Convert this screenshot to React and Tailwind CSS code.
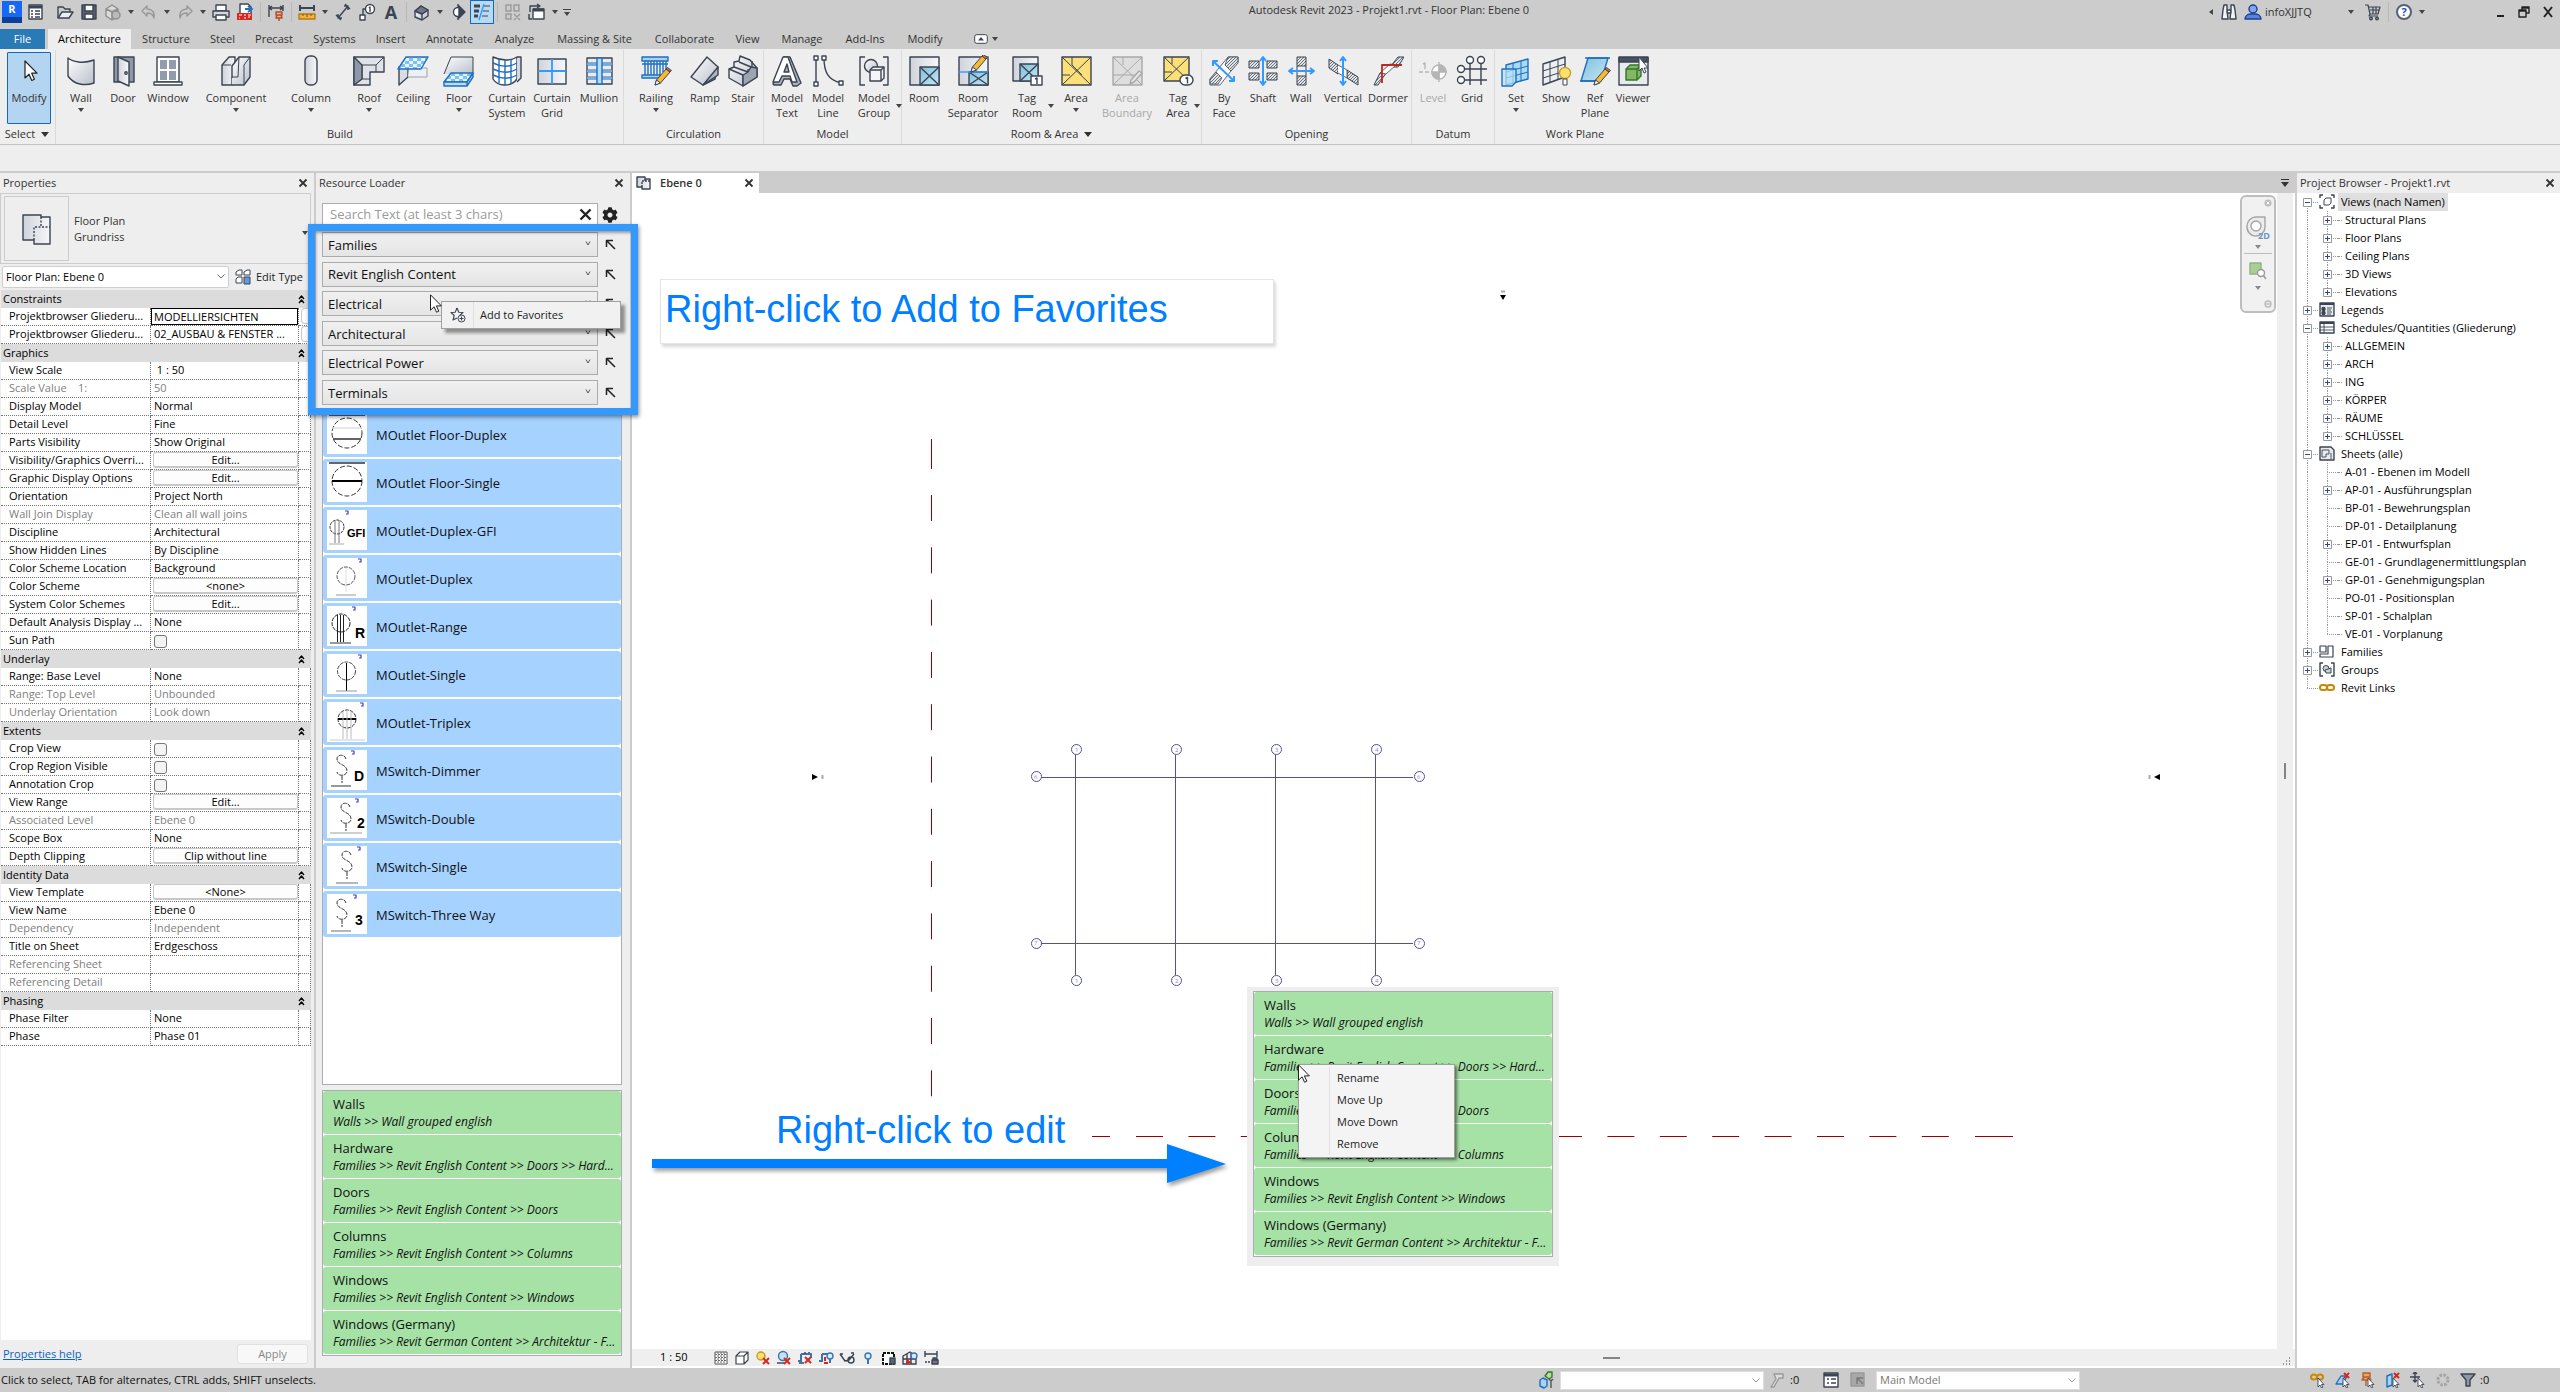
import clsx from 'clsx';
import { FaCog } from 'react-icons/fa';

const INK = '#3b4453';

const Svg = ({ w = 32, h = w, box = `0 0 ${w} ${h}`, className, children }) => (
  <svg width={w} height={h} viewBox={box} className={clsx('shrink-0', className)} fill="none" stroke={INK} strokeWidth="1.4" strokeLinejoin="round" aria-hidden="true">
    {children}
  </svg>
);

/* Shared fills for the ribbon icons */
const Fills = () => (
  <svg width="0" height="0" className="absolute" aria-hidden="true">
    <defs>
      <linearGradient id="metal" x1="0" y1="0" x2="1" y2="1">
        <stop offset="0" stopColor="#ffffff" />
        <stop offset="1" stopColor="#b9bfca" />
      </linearGradient>
      <linearGradient id="plate" x1="0" y1="0" x2="1" y2="0">
        <stop offset="0" stopColor="#cfd3da" />
        <stop offset="1" stopColor="#f6f7f9" />
      </linearGradient>
      <linearGradient id="aqua" x1="0" y1="0" x2="1" y2="1">
        <stop offset="0" stopColor="#7fbfdc" />
        <stop offset="1" stopColor="#c6e6f5" />
      </linearGradient>
      <pattern id="hatch" width="3" height="3" patternUnits="userSpaceOnUse">
        <rect width="3" height="3" fill="#e3e5e9" />
        <path d="M0 3L3 0" stroke="#5c6470" strokeWidth="0.9" />
      </pattern>
      <pattern id="check" width="8" height="6" patternUnits="userSpaceOnUse">
        <rect width="8" height="6" fill="#e4f3fd" />
        <path d="M0 0h4v3H0zM4 3h4v3H4z" fill="#7ec1f0" />
      </pattern>
    </defs>
  </svg>
);

const Pencil = () => (
  <g strokeWidth="1">
    <path d="M15 30l1.500-5L26 14l4 3-9.500 11z" fill="#f7b92f" />
    <path d="M26 14l1.500-1.500 4 3L30 17z" fill="#e06a4a" />
    <path d="M15 30l1.500-5 4 3z" fill="#fff" />
  </g>
);

const Pointer = ({ w = 12 }) => (
  <svg width={w} height="19" viewBox="0 0 12 19" fill="#fff" stroke="#222" strokeWidth="1" aria-hidden="true">
    <path d="M.5 .8v15.400l3.600-3.400 2.400 5.400 2.300-1-2.400-5.300h5z" />
  </svg>
);

const ribbonIcons = {
  modify: <g stroke="#222" strokeWidth="1.2"><path d="M12 5v17l4-3.800 2.800 6.300 2.600-1.200-2.700-6.100h5.300z" fill="#fff" /></g>,
  wall: <path d="M3 3c5 4 15 6 26 2v23c-9 3-20 2-26-7z" fill="url(#metal)" />,
  door: <g><path d="M7 2h20v25H7z" fill="#8f98a8" /><path d="M11 2l11 5v24l-11-5z" fill="url(#plate)" /><circle cx="19" cy="18" r="1.200" /></g>,
  window: <g><path d="M5 2h22v25H5z" fill="#fff" /><path d="M8 5h7v9H8zM17 5h7v9h-7zM8 16h7v9H8zM17 16h7v9h-7z" fill="#939cac" stroke="none" /><path d="M2 27h28v3H2z" fill="#fff" /></g>,
  component: <g><path d="M2 10l7-8h6v18l-3 3v7H2z" fill="url(#plate)" /><path d="M12 23V11l7-9h11v20l-6 8H12" fill="url(#metal)" /><path d="M2 10h9M19 2l-1 20h-6M24 10v20M24 10l6-8" strokeWidth="1" /></g>,
  column: <rect x="10" y="1" width="12" height="29" rx="5" fill="url(#plate)" />,
  roof: <g><path d="M1 2h30v15H17v13H1z" fill="#dfe2e7" /><path d="M1 2l8 8h14v7M9 10v14l-8 6M31 2l-8 8M9 24h8" strokeWidth="1" /><path d="M1 2l8 8v14l-8 6z" fill="#8f98a8" /></g>,
  ceiling: <g><path d="M2 12v18l9-8V12z" fill="#d9dde3" /><path d="M12 13h18v9H11" fill="#eef0f3" stroke="#9aa1ad" strokeWidth="1" /><path d="M1 14L9 2h22l-7 12z" fill="url(#check)" stroke="#1f6fbf" /></g>,
  floor: <g><path d="M1 19L8 2h22v17" fill="url(#metal)" strokeWidth="1" /><path d="M1 27l7-9h22l-6 9z" fill="url(#check)" stroke="#1f6fbf" /><path d="M1 27h23v4H1zM24 27l6-9v4l-6 9z" fill="#b6dcf6" stroke="#1f6fbf" /></g>,
  curtainSystem: <g><path d="M2 2c8 4 18 4 24 0v22c-6 8-19 8-24 0z" fill="#fff" /><path d="M26 2h4v21l-4 4" fill="#d5d9df" /><path d="M8 4v24M14 5v25M20 4v25M2 8c8 4 17 4 24 0M2 14c8 4 17 4 24 0M2 20c8 4 17 4 24 0" stroke="#1f6fbf" /></g>,
  curtainGrid: <g><path d="M2 4h28v25H2z" fill="url(#plate)" /><path d="M16 4v25M2 16h28" stroke="#3399ff" strokeWidth="1.800" /></g>,
  mullion: <g><path d="M4 3h25v26H4z" fill="#e9ebee" /><path d="M4 9h25M4 16h25M4 23h25" stroke="#1f6fbf" strokeWidth="3" /><path d="M4 9h25M4 16h25M4 23h25" stroke="#cfe7fa" strokeWidth="1" /><path d="M14 3h5v26h-5z" fill="#b6dcf6" stroke="#1f6fbf" /></g>,
  railing: <g><path d="M2 2h26v4H2z" fill="#a9d3f5" stroke="#1f6fbf" /><path d="M5 6v14M8 6v14M11 6v14M14 6v14M17 6v14M20 6v14M23 6v11M26 6v8M2 9h26" stroke="#1f6fbf" /><path d="M2 20h18v3H2z" fill="#a9d3f5" stroke="#1f6fbf" /><Pencil /></g>,
  ramp: <g><path d="M2 22L18 2l11 10-3 12-12 6z" fill="url(#metal)" /><path d="M14 30l15-18v8z" fill="#aeb5c1" /></g>,
  stair: <g><path d="M2 14l5-2V7l5-1 1-5 10 4 7 8v9L16 31 2 23z" fill="url(#metal)" /><path d="M2 14l14 6M7 12l14 5M12 7l12 5M16 20v11M21 14v5M25 6v6" /><path d="M16 20l5-3 3-5 6 1v9L16 31z" fill="#9ca4b1" /></g>,
  modelText: <g><path d="M2 29L13 2h6l11 26-4 3h-4l-3-7h-6l-3 6H3z" fill="#aab1bd" /><path d="M2 27L12 2h5l9 25h-5l-2-6h-8l-3 6zM13 17h5l-2-8z" fill="#fff" /></g>,
  modelLine: <g><path d="M4 3v26M12 3c0 14 4 22 17 25" /><path d="M2 1h4v4H2zM2 27h4v4H2zM10 1h4v4h-4zM27 26h4v4h-4z" fill="#fff" /></g>,
  modelGroup: <g><path d="M7 2H2v28h5M25 2h5v28h-5" /><circle cx="13" cy="11" r="6.500" fill="url(#metal)" /><path d="M12 15l3-3h11v11l-3 3H12z" fill="#f4f5f7" /><path d="M12 15h11v11M23 15l3-3" /></g>,
  room: <g><path d="M2 2h29v28H2z" fill="url(#plate)" /><path d="M12 12h19v18H12z" fill="url(#aqua)" /><path d="M12 12l19 18M31 12L12 30" /></g>,
  roomSeparator: <g><path d="M2 2h29v28H2z" fill="url(#plate)" /><path d="M12 17h19v13H12z" fill="url(#aqua)" /><path d="M12 17l19 13M31 17L12 30" /><path d="M2 17h29" stroke="#3399ff" /><g transform="translate(-1 -13)"><Pencil /></g></g>,
  tagRoom: <g><path d="M2 2h25v24H2z" fill="url(#plate)" /><path d="M9 9h18v17H9z" fill="url(#aqua)" /><path d="M9 9l18 17M27 9L9 26" /><path d="M20 21h11v9H20z" fill="#fff" /><path d="M24 24l2-1v6" /></g>,
  area: <g><path d="M2 2h29v28H2z" fill="#fbe07a" /><path d="M2 2l29 28M31 2L2 30M12 2v8l10 10M2 20h8" strokeWidth="1" /></g>,
  areaBoundary: <g stroke="#a9a9a9"><path d="M2 2h29v28H2z" fill="#dedede" /><path d="M2 2l29 28M31 2L2 30M12 2v8M2 20h29" strokeWidth="1" /><path d="M19 29l1-4 8-9 3 2-8 9z" fill="#e6e6e6" /></g>,
  tagArea: <g><path d="M2 2h25v24H2z" fill="#fbe07a" /><path d="M2 2l25 24M27 2L2 26M10 2v7M2 17h8" strokeWidth="1" /><rect x="18" y="20" width="13" height="10" rx="5" fill="#fff" /><path d="M23.500 23.500l2-1v6" /></g>,
  byFace: <g><path d="M20 2h10v5L12 30H2v-6z" fill="#fff" strokeWidth="0.800" /><path d="M20 2h10v6l-7 8-6-6zM2 24l6-7 6 6-4 6H2z" fill="url(#hatch)" strokeWidth="0.800" /><path d="M5 6l21 20M5 11V6h5M26 21v5h-5" stroke="#3399ff" strokeWidth="2" /></g>,
  shaft: <g><path d="M2 6h10v7H2zM20 6h10v7H20zM2 18h10v7H2zM20 18h10v7H20z" fill="url(#hatch)" strokeWidth="1" /><path d="M16 3v27M13 6l3-4 3 4M13 26l3 4 3-4" stroke="#3399ff" strokeWidth="2" /></g>,
  wallOpening: <g><path d="M12 2h9v9h-9zM12 21h9v9h-9z" fill="url(#hatch)" strokeWidth="1" /><path d="M12 11v10M21 11v10" strokeWidth="1" /><path d="M5 16h23M8 13l-4 3 4 3M25 13l4 3-4 3" stroke="#3399ff" strokeWidth="2" /></g>,
  vertical: <g><path d="M2 4l9 6v9L2 13zM20 15l11 7v8l-11-7z" fill="url(#hatch)" strokeWidth="1" /><path d="M11 10l9 5v8l-9-5" fill="#fff" strokeWidth="0.800" /><path d="M16 3v26M13 6l3-4 3 4M13 26l3 4 3-4" stroke="#3399ff" strokeWidth="2" /></g>,
  dormer: <g><path d="M2 30l6-12h6L6 30zM18 12l8-10h6l-6 10z" fill="url(#hatch)" strokeWidth="1" /><path d="M8 18l10-9 6 1-10 9z" fill="#fff" strokeWidth="0.800" /><path d="M10 28V10h20" stroke="#c0271d" strokeWidth="1.800" /></g>,
  level: <g stroke="#b5b5b5"><path d="M2 17h28" strokeDasharray="4 2" /><circle cx="22" cy="17" r="7" fill="#fff" /><path d="M22 17v-7a7 7 0 017 7zM22 17v7a7 7 0 01-7-7z" fill="#b5b5b5" /><path d="M22 7v20M6 9l2-1v6" /></g>,
  grid: <g><path d="M14 9v21M25 9v21M9 14h22M9 25h22" /><circle cx="14" cy="5" r="3.500" fill="#fff" /><circle cx="25" cy="5" r="3.500" fill="#fff" /><circle cx="5" cy="14" r="3.500" fill="#fff" /><circle cx="5" cy="25" r="3.500" fill="#fff" /></g>,
  set: <g stroke="#1f6fbf"><path d="M6 10L28 4v20L6 30z" fill="#a9d9f3" /><path d="M13 8v20M21 6v20M6 17l22-6M6 23l22-6" strokeWidth="1" /><path d="M2 14h14v13l-4 4H2z" fill="#bfe3f7" fillOpacity="0.700" /></g>,
  show: <g><path d="M3 9l22-7v20L3 30z" fill="#eceef1" /><path d="M10 7v20M18 5v20M3 16l22-7M3 23l22-7" strokeWidth="1" /><circle cx="25" cy="18" r="5.500" fill="#fbe26a" stroke="#c9a227" /><path d="M23 24h4v6h-4z" fill="#fff" strokeWidth="1" /></g>,
  refPlane: <g><path d="M9 3h20l-7 23H2z" fill="url(#aqua)" stroke="#1f6fbf" /><path d="M6 3h25M1 26h21" stroke="#1f6fbf" /><Pencil /></g>,
  viewer: <g><path d="M2 3h29v27H2z" fill="#e8eaed" /><path d="M2 2h29v5H2z" fill="#4a5160" /><path d="M9 14l4-4h11v11l-4 4H9z" fill="#86b564" stroke="#2f7a24" /><path d="M9 14h11v11M20 14l4-4" stroke="#2f7a24" /><path d="M22 2v14l3-3 2 5 2-1-2-4h4z" fill="#fff" strokeWidth="1" /></g>,
};

const ribbon = [
  {
    title: 'Select', menu: true, panel: 'w-[56px] pl-[7px]',
    tools: [{ icon: 'modify', label: ['Modify'], w: 'w-[44px]', active: true }],
  },
  {
    title: 'Build', panel: 'pl-px w-[568px]',
    tools: [
      { icon: 'wall', label: ['Wall'], w: 'w-[48px]', arrow: 'below' },
      { icon: 'door', label: ['Door'], w: 'w-[36px]' },
      { icon: 'window', label: ['Window'], w: 'w-[54px]' },
      { icon: 'component', label: ['Component'], w: 'w-[82px]', arrow: 'below' },
      { icon: 'column', label: ['Column'], w: 'w-[68px]', arrow: 'below' },
      { icon: 'roof', label: ['Roof'], w: 'w-[48px]', arrow: 'below' },
      { icon: 'ceiling', label: ['Ceiling'], w: 'w-[40px]' },
      { icon: 'floor', label: ['Floor'], w: 'w-[52px]', arrow: 'below' },
      { icon: 'curtainSystem', label: ['Curtain', 'System'], w: 'w-[44px]' },
      { icon: 'curtainGrid', label: ['Curtain', 'Grid'], w: 'w-[46px]' },
      { icon: 'mullion', label: ['Mullion'], w: 'w-[48px]' },
    ],
  },
  {
    title: 'Circulation', panel: 'w-[140px]',
    tools: [
      { icon: 'railing', label: ['Railing'], w: 'w-[64px]', arrow: 'below' },
      { icon: 'ramp', label: ['Ramp'], w: 'w-[34px]' },
      { icon: 'stair', label: ['Stair'], w: 'w-[42px]' },
    ],
  },
  {
    title: 'Model', panel: 'w-[138px]',
    tools: [
      { icon: 'modelText', label: ['Model', 'Text'], w: 'w-[46px]' },
      { icon: 'modelLine', label: ['Model', 'Line'], w: 'w-[36px]' },
      { icon: 'modelGroup', label: ['Model', 'Group'], w: 'w-[56px]', arrow: 'side' },
    ],
  },
  {
    title: 'Room & Area', menu: true, panel: 'w-[300px]',
    tools: [
      { icon: 'room', label: ['Room'], w: 'w-[44px]' },
      { icon: 'roomSeparator', label: ['Room', 'Separator'], w: 'w-[54px]' },
      { icon: 'tagRoom', label: ['Tag', 'Room'], w: 'w-[54px]', arrow: 'side' },
      { icon: 'area', label: ['Area'], w: 'w-[44px]', arrow: 'below' },
      { icon: 'areaBoundary', label: ['Area', 'Boundary'], w: 'w-[58px]', disabled: true },
      { icon: 'tagArea', label: ['Tag', 'Area'], w: 'w-[44px]', arrow: 'side' },
    ],
  },
  {
    title: 'Opening', panel: 'w-[210px]',
    tools: [
      { icon: 'byFace', label: ['By', 'Face'], w: 'w-[44px]' },
      { icon: 'shaft', label: ['Shaft'], w: 'w-[34px]' },
      { icon: 'wallOpening', label: ['Wall'], w: 'w-[42px]' },
      { icon: 'vertical', label: ['Vertical'], w: 'w-[42px]' },
      { icon: 'dormer', label: ['Dormer'], w: 'w-[48px]' },
    ],
  },
  {
    title: 'Datum', panel: 'w-[83px]',
    tools: [
      { icon: 'level', label: ['Level'], w: 'w-[42px]', disabled: true },
      { icon: 'grid', label: ['Grid'], w: 'w-[36px]' },
    ],
  },
  {
    title: 'Work Plane', panel: 'w-[160px] border-r-0',
    tools: [
      { icon: 'set', label: ['Set'], w: 'w-[42px]', arrow: 'below' },
      { icon: 'show', label: ['Show'], w: 'w-[38px]' },
      { icon: 'refPlane', label: ['Ref', 'Plane'], w: 'w-[40px]' },
      { icon: 'viewer', label: ['Viewer'], w: 'w-[36px]' },
    ],
  },
];

const tabs = [
  ['Structure', 'w-[68px]'], ['Steel', 'w-[45px]'], ['Precast', 'w-[58px]'], ['Systems', 'w-[63px]'],
  ['Insert', 'w-[49px]'], ['Annotate', 'w-[69px]'], ['Analyze', 'w-[61px]'], ['Massing & Site', 'w-[99px]'],
  ['Collaborate', 'w-[81px]'], ['View', 'w-[45px]'], ['Manage', 'w-[64px]'], ['Add-Ins', 'w-[62px]'], ['Modify', 'w-[58px]'],
];

/* Quick access toolbar, left to right */
const quick = [
  { name: 'Home', draw: <g><path d="M2 2h13v14H2z" fill="#fff" /><path d="M2 4h13" strokeWidth="3" /><path d="M4 8h2M4 11h2M4 14h2M8 8h5M8 11h5M8 14h5" /></g> },
  { gap: true },
  { name: 'Open', draw: <g><path d="M2 15V4h5l2 2h5v3" /><path d="M2 15l4-6h11l-4 6z" fill="#eceef2" /></g> },
  { name: 'Save', draw: <g><path d="M2 2h14v14H2z" fill="#58606e" /><path d="M5 2h8v6H5zM5 11h8v5H5z" fill="#fff" /></g> },
  { name: 'Synchronize', draw: <g stroke="#8e8e8e"><path d="M2 6l6-4 6 4v7l-6 4-6-4zM2 6l6 3 6-3M8 9v8" fill="#ddd" /><circle cx="12" cy="12" r="4" fill="#bbb" /></g> },
  { arrow: true },
  { name: 'Undo', draw: <path d="M7 3L2 8l5 5v-3c4 0 6 1 7 5 1-6-2-9-7-9z" stroke="#999" /> },
  { arrow: true },
  { name: 'Redo', draw: <path d="M11 3l5 5-5 5v-3c-4 0-6 1-7 5-1-6 2-9 7-9z" stroke="#999" /> },
  { arrow: true },
  { name: 'Print', draw: <g><path d="M4 2h10v6H4z" fill="#fff" /><path d="M1 8h16v6H1z" fill="#d5d8de" /><path d="M4 12h10v5H4z" fill="#fff" /></g> },
  { name: 'PDF', draw: <g><path d="M4 1h8l3 3v8H4z" fill="#fff" /><path d="M1 10h15v7H1z" fill="#d4291e" stroke="none" /><path d="M3 12h3M8 12h2M12 12h3M3 15h1M8 15h2M12 14h2" stroke="#fff" strokeWidth="1" /><path d="M9 6h5M12 3l4 3-4 3" stroke="#1f6fbf" strokeWidth="2" /></g> },
  { sep: true },
  { name: 'Activate dimensions', draw: <g><path d="M2 2v12M16 2v6M2 5h14M5 3L2 5l3 2M13 3l3 2-3 2" /><path d="M9 9h6v3H9zM10 12h4l1 3H9zM12 15v3" fill="#f1b48a" stroke="#b5482a" /></g> },
  { sep: true },
  { name: 'Measure', draw: <g><path d="M2 2v6M16 2v6M2 5h14" strokeWidth="2" /><path d="M1 11h16v5H1z" fill="#f3b43a" stroke="#b57b14" /><path d="M5 11v2M9 11v3M13 11v2" stroke="#7a520c" strokeWidth="1" /></g> },
  { arrow: true },
  { name: 'Aligned dimension', draw: <path d="M4 15L14 3M2 12l5 5M11 1l5 5M4 11v4h4M10 3h4v4" /> },
  { name: 'Tag by category', draw: <g><path d="M2 12h5v5H2z" fill="#fff" /><path d="M5 12V6h3" /><circle cx="12" cy="6" r="4.500" fill="#fff" /><path d="M11 5l1-1v5" /></g> },
  { name: 'Text', glyph: true },
  { sep: true },
  { name: 'Default 3D view', draw: <g><path d="M2 8l6-5 7 4v6l-6 4-7-3z" fill="url(#metal)" /><path d="M2 8l7 3 6-4M9 11v6" /><path d="M2 8l6-5 7 4-6 4z" fill="#707887" /></g> },
  { arrow: true },
  { name: 'Section', draw: <g><circle cx="9" cy="9" r="4.500" fill="#fff" /><path d="M9 1v3M9 14v3M10 3l6 6-6 6z" fill={INK} /></g> },
  { name: 'Thin lines', active: true, draw: <g><path d="M1 3h6M1 8h5M1 13h4" strokeWidth="3" /><path d="M11 3h6M10 8h6M9 13h6" strokeWidth="1" /><path d="M11 1L6 17" stroke="#3399ff" /></g> },
  { sep: true },
  { name: 'Close inactive views', draw: <g stroke="#9a9a9a"><path d="M2 2h5v6H2zM10 2h5v6h-5zM2 11h5v5H2zM10 11l6 6M16 11l-6 6" /></g> },
  { name: 'Switch windows', draw: <g><path d="M5 6h11v10H5z" fill="#fff" /><path d="M5 7h11" strokeWidth="3" /><path d="M2 9V3h9M9 1l3 2-3 2M1 11v5h3" /></g> },
  { arrow: true },
  { arrow: true, bar: true },
];

const properties = [
  { head: 'Constraints' },
  { name: 'Projektbrowser Gliederu...', value: 'MODELLIERSICHTEN', kind: 'focus' },
  { name: 'Projektbrowser Gliederu...', value: '02_AUSBAU & FENSTER ...', kind: 'more' },
  { head: 'Graphics' },
  { name: 'View Scale', value: ' 1 : 50' },
  { name: 'Scale Value    1:', value: '50', dim: true },
  { name: 'Display Model', value: 'Normal' },
  { name: 'Detail Level', value: 'Fine' },
  { name: 'Parts Visibility', value: 'Show Original' },
  { name: 'Visibility/Graphics Overri...', value: 'Edit...', kind: 'button' },
  { name: 'Graphic Display Options', value: 'Edit...', kind: 'button' },
  { name: 'Orientation', value: 'Project North' },
  { name: 'Wall Join Display', value: 'Clean all wall joins', dim: true },
  { name: 'Discipline', value: 'Architectural' },
  { name: 'Show Hidden Lines', value: 'By Discipline' },
  { name: 'Color Scheme Location', value: 'Background' },
  { name: 'Color Scheme', value: '<none>', kind: 'button' },
  { name: 'System Color Schemes', value: 'Edit...', kind: 'button' },
  { name: 'Default Analysis Display ...', value: 'None' },
  { name: 'Sun Path', kind: 'check' },
  { head: 'Underlay' },
  { name: 'Range: Base Level', value: 'None' },
  { name: 'Range: Top Level', value: 'Unbounded', dim: true },
  { name: 'Underlay Orientation', value: 'Look down', dim: true },
  { head: 'Extents' },
  { name: 'Crop View', kind: 'check' },
  { name: 'Crop Region Visible', kind: 'check' },
  { name: 'Annotation Crop', kind: 'check' },
  { name: 'View Range', value: 'Edit...', kind: 'button' },
  { name: 'Associated Level', value: 'Ebene 0', dim: true },
  { name: 'Scope Box', value: 'None' },
  { name: 'Depth Clipping', value: 'Clip without line', kind: 'button' },
  { head: 'Identity Data' },
  { name: 'View Template', value: '<None>', kind: 'button' },
  { name: 'View Name', value: 'Ebene 0' },
  { name: 'Dependency', value: 'Independent', dim: true },
  { name: 'Title on Sheet', value: 'Erdgeschoss' },
  { name: 'Referencing Sheet', value: '', dim: true },
  { name: 'Referencing Detail', value: '', dim: true },
  { head: 'Phasing' },
  { name: 'Phase Filter', value: 'None' },
  { name: 'Phase', value: 'Phase 01' },
];

const levels = ['Families', 'Revit English Content', 'Electrical', 'Architectural', 'Electrical Power', 'Terminals'];

const SwitchCurve = () => <path d="M19 9c-1-5-9-5-9 0 0 6 10 5 10 12 0 5-9 6-10 1M15 26v7" stroke="#333" strokeDasharray="4 1" strokeWidth="1" />;

const resources = [
  { name: 'MOutlet Floor-Duplex', draw: <g><path d="M2 1h36" stroke="#333" /><circle cx="20" cy="19" r="15" stroke="#333" strokeDasharray="5 2" strokeWidth="1" /><path d="M6 25h28" stroke="#222" /><path d="M5 14h30" stroke="#ddd" /></g> },
  { name: 'MOutlet Floor-Single', draw: <g><path d="M2 1h36" stroke="#333" /><circle cx="20" cy="19" r="15" stroke="#333" strokeDasharray="5 2" strokeWidth="1" /><path d="M5 19h30" stroke="#000" strokeWidth="2" /></g> },
  { name: 'MOutlet-Duplex-GFI', text: 'GFI', tx: 20, ty: 27, mark: 18, draw: <g stroke="#333" strokeWidth="1"><circle cx="10" cy="17" r="7" strokeDasharray="3 1" /><path d="M8 10v23M12 10v23" stroke="#777" /><path d="M2 34h15" stroke="#aaa" /></g> },
  { name: 'MOutlet-Duplex', mark: 31, draw: <g stroke="#555" strokeWidth="1"><circle cx="19" cy="18" r="9" strokeDasharray="4 1" /><path d="M19 10v24" stroke="#ddd" /><path d="M9 37h20" stroke="#999" /></g> },
  { name: 'MOutlet-Range', text: 'R', tx: 28, ty: 32, mark: 25, draw: <g stroke="#222" strokeWidth="1"><circle cx="14" cy="17" r="9" strokeDasharray="4 1" /><path d="M10.500 9v27M13.500 9v27M16.500 9v27" /><path d="M3 37h21" stroke="#999" strokeWidth="2" /></g> },
  { name: 'MOutlet-Single', mark: 31, draw: <g stroke="#444" strokeWidth="1"><circle cx="19.500" cy="17" r="9" strokeDasharray="4 1" /><path d="M19.500 9v28" stroke="#000" /><path d="M9 37h21" stroke="#999" /></g> },
  { name: 'MOutlet-Triplex', mark: 33, draw: <g stroke="#333" strokeWidth="1"><circle cx="20" cy="17" r="9" strokeDasharray="4 1" /><path d="M11 17h18" stroke="#000" strokeWidth="2" /><path d="M16 10v27M20 8v29M24 10v27" stroke="#bbb" /><path d="M3 38h35" stroke="#ccc" /></g> },
  { name: 'MSwitch-Dimmer', text: 'D', tx: 27, ty: 31, mark: 24, draw: <g><SwitchCurve /><path d="M4 36h20" stroke="#999" strokeWidth="2" /></g> },
  { name: 'MSwitch-Double', text: '2', tx: 30, ty: 30, mark: 28, draw: <g><g transform="translate(4 0)"><SwitchCurve /></g><path d="M3 35h32" stroke="#bbb" /></g> },
  { name: 'MSwitch-Single', mark: 30, draw: <g><g transform="translate(5 0)"><SwitchCurve /></g><path d="M9 37h22" stroke="#999" /></g> },
  { name: 'MSwitch-Three Way', text: '3', tx: 28, ty: 31, mark: 26, draw: <g><SwitchCurve /><path d="M4 37h20" stroke="#999" /></g> },
];

const favorites = [
  ['Walls', 'Walls >> Wall grouped english'],
  ['Hardware', 'Families >> Revit English Content >> Doors >> Hard...'],
  ['Doors', 'Families >> Revit English Content >> Doors'],
  ['Columns', 'Families >> Revit English Content >> Columns'],
  ['Windows', 'Families >> Revit English Content >> Windows'],
  ['Windows (Germany)', 'Families >> Revit German Content >> Architektur - F...'],
];

const treeIcons = {
  views: <g><path d="M4 1H1v3M1 11v3h3M12 1h3v3M15 11v3h-3" /><path d="M5 6l2-2h5v5l-2 2H5z" fill="#fff" strokeWidth="1" /></g>,
  legends: <g><path d="M1 1h14v13H1z" fill="#e8eaed" /><path d="M1 2h14" strokeWidth="2" /><circle cx="4.500" cy="7" r="1.500" fill={INK} /><circle cx="4.500" cy="11" r="1.500" fill={INK} /><path d="M8 6h5M8 8h4M8 10h5M8 12h4" strokeWidth="0.900" /></g>,
  schedules: <g><path d="M1 2h14v11H1z" fill="#fff" /><path d="M1 3h14" strokeWidth="2" /><path d="M1 7h14M1 10h14M5 3v10" strokeWidth="0.900" /></g>,
  sheets: <g><path d="M1 1h11l3 3v10H1z" fill="#e8eaed" /><path d="M3 4h7v4H7v3H3zM12 7v6" strokeWidth="0.900" /></g>,
  families: <path d="M1 2h6v6H1zM9 2h5v11H1v-3h8z" fill="#fff" strokeWidth="1.200" />,
  groups: <g><path d="M4 1H1v13h3M12 1h3v13h-3" /><circle cx="7" cy="6.500" r="3" fill="#cdd2da" strokeWidth="1" /><path d="M6 8l6-2v5H7z" fill="#cdd2da" strokeWidth="1" /></g>,
  links: <g stroke="#c88a00" strokeWidth="2"><rect x="1" y="5" width="7" height="5" rx="2.500" /><rect x="8" y="5" width="7" height="5" rx="2.500" /></g>,
};

const tree = [
  { name: 'Views (nach Namen)', icon: 'views', open: true, selected: true, items: ['+Structural Plans', '+Floor Plans', '+Ceiling Plans', '+3D Views', '+Elevations'] },
  { name: 'Legends', icon: 'legends', box: true },
  { name: 'Schedules/Quantities (Gliederung)', icon: 'schedules', open: true, items: ['+ALLGEMEIN', '+ARCH', '+ING', '+KÖRPER', '+RÄUME', '+SCHLÜSSEL'] },
  {
    name: 'Sheets (alle)', icon: 'sheets', open: true,
    items: [' A-01 - Ebenen im Modell', '+AP-01 - Ausführungsplan', ' BP-01 - Bewehrungsplan', ' DP-01 - Detailplanung', '+EP-01 - Entwurfsplan', ' GE-01 - Grundlagenermittlungsplan', '+GP-01 - Genehmigungsplan', ' PO-01 - Positionsplan', ' SP-01 - Schalplan', ' VE-01 - Vorplanung'],
  },
  { name: 'Families', icon: 'families', box: true },
  { name: 'Groups', icon: 'groups', box: true },
  { name: 'Revit Links', icon: 'links' },
];

const Caret = ({ className }) => (
  <svg width="6" height="4" viewBox="0 0 6 4" className={className} fill="#444" aria-hidden="true"><path d="M0 0h6L3 4z" /></svg>
);

const CloseButton = ({ label }) => (
  <button aria-label={label} className="flex size-5 shrink-0 items-center justify-center">
    <Svg w={10}><path d="M1.500 1.500l7 7M8.500 1.500l-7 7" stroke="#333" strokeWidth="1.800" /></Svg>
  </button>
);

const Separator = () => <span className="mx-[3px] h-5 w-px bg-[#b8b8b8]" />;

const TitleBar = () => (
  <header className="flex h-[29px] items-start bg-[#cccccc]">
    <div className="flex h-6 items-center">
      <button aria-label="Application menu" className="flex h-6 w-6 flex-col items-center">
        <span className="mt-px flex h-4 w-5 items-center justify-center bg-[#1668f5] text-[11px] leading-4 font-bold text-white">R</span>
        <span className="h-1.5 w-5 bg-[#0b3f9c]" />
      </button>
      {quick.map((q, i) => {
        if (q.gap) return <span key={i} className="w-[5px]" />;
        if (q.sep) return <Separator key={i} />;
        if (q.arrow) {
          return (
            <button key={i} aria-label="More" className="flex h-6 w-3 flex-col items-center justify-center gap-0.5">
              {q.bar && <span className="h-px w-2 bg-[#444]" />}
              <Caret />
            </button>
          );
        }
        return (
          <button key={i} aria-label={q.name} className={clsx('flex size-6 items-center justify-center', q.active && 'border border-[#1668b8] bg-[#b9d9f2]')}>
            {q.glyph ? <span className="text-[18px] leading-6 font-bold text-[#3b4453]">A</span> : <Svg w={18}>{q.draw}</Svg>}
          </button>
        );
      })}
    </div>

    <h1 className="flex-1 text-center text-[11px] leading-5 text-[#333]">Autodesk Revit 2023 - Projekt1.rvt - Floor Plan: Ebene 0</h1>

    <div className="flex h-6 items-center">
      <button aria-label="Collapse search" className="flex w-3 justify-center"><Caret className="rotate-90" /></button>
      <button aria-label="Search" className="flex w-6 justify-center">
        <Svg w={18}><path d="M3 7l1-5h3v5l1 9H2zM15 7l-1-5h-3v5l-1 9h6zM7 7h4v3H7z" fill="#f3f4f6" /></Svg>
      </button>
      <button className="flex w-[104px] items-center text-[11px] text-[#333]">
        <span className="flex w-6 justify-center">
          <Svg w={18}><circle cx="9" cy="6" r="4" fill="#7fa6ee" stroke="#1d3f8f" /><path d="M1 16c0-4 4-5 6-5h4c2 0 6 1 6 5z" fill="#5685e0" stroke="#1d3f8f" /></Svg>
        </span>
        infoXJJTQ
      </button>
      <button aria-label="Account menu" className="flex w-3 justify-center"><Caret /></button>
      <button aria-label="App store" className="ml-1 flex w-6 justify-center">
        <Svg w={18}><path d="M1 2h3l2 9h8l2-7H5M6 11l-1 2h9M6 7h9M9 4v7M12 4v7" strokeWidth="1.200" /><circle cx="7" cy="15.500" r="1.300" /><circle cx="13" cy="15.500" r="1.300" /></Svg>
      </button>
      <Separator />
      <button aria-label="Help" className="flex w-6 justify-center">
        <span className="flex size-4 items-center justify-center rounded-full border-2 border-[#55617a] bg-white text-[11px] leading-3 font-bold text-[#1d4fc4]">?</span>
      </button>
      <button aria-label="Help menu" className="flex w-3 justify-center"><Caret /></button>
      <div className="ml-[60px] flex">
        <button aria-label="Minimize" className="flex size-6 items-center justify-center"><Svg w={12}><path d="M3 10h7" stroke="#222" strokeWidth="2" /></Svg></button>
        <button aria-label="Restore" className="flex size-6 items-center justify-center"><Svg w={12}><path d="M4 4V1h7v6H8M1 4h7v7H1zM1 5h7M4 2h7" stroke="#222" /></Svg></button>
        <button aria-label="Close" className="flex size-6 items-center justify-center"><Svg w={12}><path d="M2 1l8 10M10 1L2 11" stroke="#222" strokeWidth="2" /></Svg></button>
      </div>
    </div>
  </header>
);

const TabBar = () => (
  <nav className="flex h-5 items-stretch bg-[#cccccc] text-[11px] text-[#333]">
    <button className="w-[45px] bg-[#2a7ab5] text-white">File</button>
    <button className="mr-px ml-[3px] w-[83px] bg-[#eeeeee] text-black">Architecture</button>
    {tabs.map(([name, w]) => (
      <button key={name} className={clsx('whitespace-nowrap', w)}>{name}</button>
    ))}
    <button aria-label="Ribbon display" className="ml-5 flex items-center gap-1">
      <Svg w={14} h={10}><rect x="0.700" y="0.700" width="12.600" height="8.600" rx="2" fill="#fff" strokeWidth="1" /><path d="M4 6.500h6L7 3z" fill={INK} stroke="none" /></Svg>
      <Caret />
    </button>
  </nav>
);

const Tool = ({ icon, label, w, arrow, active, disabled }) => (
  <button
    disabled={disabled}
    className={clsx(
      'relative flex h-[72px] shrink-0 flex-col items-center pt-[3px]',
      w,
      active && 'rounded-[1px] border border-[#1668b8] bg-[#b4d5f1]',
      disabled ? 'text-[#a8a8a8]' : 'text-[#333]',
    )}
  >
    <Svg w={32}>{ribbonIcons[icon]}</Svg>
    <span className={clsx('flex flex-col items-center text-[11px] leading-[15px] whitespace-nowrap', active ? 'mt-0.5' : 'mt-[3px]')}>
      {label.map((l) => <span key={l}>{l}</span>)}
    </span>
    {arrow === 'below' && <Caret className="mt-[3px]" />}
    {arrow === 'side' && <Caret className="absolute right-0 bottom-4" />}
  </button>
);

const Ribbon = () => (
  <div className="flex h-[96px] border-b border-[#c4c4c4] bg-[#eeeeee] pt-px">
    {ribbon.map((p) => (
      <section key={p.title} className={clsx('flex shrink-0 flex-col border-r border-[#dadada] pt-0.5', p.panel)}>
        <div className="flex h-[74px]">{p.tools.map((t) => <Tool key={t.icon} {...t} />)}</div>
        <h2 className={clsx('flex h-4 items-center justify-center gap-1.5 text-[11px] whitespace-nowrap text-[#333]', p.title === 'Select' && '-ml-2')}>
          {p.title}
          {p.menu && <svg width="8" height="5" viewBox="0 0 8 5" fill="#333" aria-hidden="true"><path d="M0 0h8L4 5z" /></svg>}
        </h2>
      </section>
    ))}
  </div>
);

const PanelHeader = ({ title, className }) => (
  <div className={clsx('flex h-5 shrink-0 items-center justify-between bg-[#eeeeee] pl-[3px]', className)}>
    <h2 className="text-[11px] text-[#333]">{title}</h2>
    <CloseButton label={`Close ${title}`} />
  </div>
);

const PropertyValue = ({ row, id }) => {
  if (row.kind === 'button') {
    return <button className="mx-0.5 block h-4 w-[145px] rounded-[3px] border border-b-2 border-[#c8c8c8] bg-[#fdfdfd] text-center leading-[13px]">{row.value}</button>;
  }
  if (row.kind === 'check') {
    return <input id={id} type="checkbox" className="mt-[3px] ml-[3px] block size-[13px] appearance-none rounded-[3px] border border-[#777] bg-[#f4f4f4]" />;
  }
  if (row.kind === 'focus') {
    return <input id={id} defaultValue={row.value} className="block h-[17px] w-full border border-black bg-white pl-0.5 leading-[15px] outline-none" />;
  }
  return <span className="block pl-[3px] whitespace-pre">{row.value}</span>;
};

const Properties = () => (
  <aside className="flex w-[316px] shrink-0 flex-col border-r-2 border-[#cccccc] bg-[#eeeeee] text-[11px]">
    <PanelHeader title="Properties" className="pr-px" />
    <div className="mr-[3px] flex h-[71px] items-center border border-[#cccccc] pl-[3px] text-[#333]">
      <div className="flex size-[65px] items-center justify-center border border-[#cccccc]">
        <Svg w={32}>
          <path d="M2 2h18v2h9v27H13v-4H2z" fill="url(#plate)" />
          <path d="M13 27V14h16M20 4v10" strokeDasharray="2 1.500" />
        </Svg>
      </div>
      <p className="ml-[5px] flex-1 leading-4">Floor Plan<br />Grundriss</p>
      <Caret className="mt-2 mr-0.5" />
    </div>
    <div className="flex h-[26px] items-center pl-0.5">
      <span className="relative block">
        <select aria-label="Instance filter" className="block h-[22px] w-[227px] appearance-none rounded-[2px] border border-[#cfcfcf] bg-white pl-[3px] text-black">
          <option>Floor Plan: Ebene 0</option>
        </select>
        <Svg w={8} h={5} className="pointer-events-none absolute top-2 right-1"><path d="M.5 .5L4 4 7.500 .5" stroke="#666" strokeWidth="1" /></Svg>
      </span>
      <button className="ml-1.5 flex items-center gap-[5px] whitespace-nowrap text-[#222]">
        <Svg w={16}><path d="M1 3l3-2h3v5H1zM9 3l3-2h3v5H9zM1 10l2-2h4v6H1z" strokeWidth="1" fill="#fff" /><path d="M9 8h6v7H9z" fill="#5aa0dc" strokeWidth="1" /></Svg>
        Edit Type
      </button>
    </div>
    <div className="mr-[3px] ml-px flex-1 bg-white">
      <table className="w-full table-fixed border-separate border-spacing-0">
        <colgroup>
          <col className="w-[150px]" />
          <col className="w-[148px]" />
          <col />
        </colgroup>
        <tbody>
          {properties.map((row, i) => {
            if (row.head) {
              return (
                <tr key={i}>
                  <th colSpan={3} className="h-[18px] bg-[#dcdcdc] p-0 text-left font-normal">
                    <div className="flex items-center justify-between pr-1.5 pl-0.5 leading-[18px]">
                      {row.head}
                      <Svg w={7} h={9}><path d="M1 4l2.500-3L6 4M1 8l2.500-3L6 8" stroke="#000" strokeWidth="1.300" /></Svg>
                    </div>
                  </th>
                </tr>
              );
            }
            const cell = 'h-[18px] overflow-hidden border-r border-b border-dotted border-[#777] p-0 align-top leading-[15px] whitespace-pre';
            return (
              <tr key={i} className={row.dim ? 'text-[#808080]' : 'text-black'}>
                <td className={clsx(cell, 'pl-2')}><label htmlFor={row.kind === 'check' || row.kind === 'focus' ? `prop-${i}` : undefined}>{row.name}</label></td>
                <td className={cell}><PropertyValue row={row} id={`prop-${i}`} /></td>
                <td className={cell}>
                  {(row.kind === 'focus' || row.kind === 'more') && (
                    <button aria-label="Browse" className="ml-0.5 block h-4 w-2.5 rounded-l-[4px] border border-r-0 border-[#c8c8c8] bg-[#fdfdfd]" />
                  )}
                </td>
              </tr>
            );
          })}
        </tbody>
      </table>
    </div>
    <div className="flex h-7 shrink-0 items-center justify-between pr-[6px] pl-[3px]">
      <a href="#help" className="text-[#0a62c9] underline">Properties help</a>
      <button disabled className="h-5 w-[71px] rounded-[3px] border border-[#e0e0e0] bg-[#f8f8f8] text-[#888]">Apply</button>
    </div>
  </aside>
);

const FavoriteList = () => (
  <ul className="w-[300px] border border-[#abadb3] bg-white">
    {favorites.map(([name, path]) => (
      <li key={name} className="mb-px h-[43px] overflow-hidden rounded-[3px] bg-[#a6e1a6] pt-[5px] pl-2.5 whitespace-nowrap text-[#111]">
        <p className="text-[13px] leading-[17px]">{name}</p>
        <p className="text-[12px] leading-[18px] italic">{path}</p>
      </li>
    ))}
  </ul>
);

const ResourceLoader = () => (
  <aside className="relative flex w-[316px] shrink-0 flex-col border-r-2 border-[#cccccc] bg-[#eeeeee] text-[13px]">
    <PanelHeader title="Resource Loader" className="pr-px" />
    <div className="flex flex-1 flex-col pt-2.5 pr-2 pb-3 pl-1.5">
      <div className="mb-1.5 flex h-[23px] items-center">
        <div className="flex h-full w-[276px] items-center border border-[#abadb3] bg-white">
          <input aria-label="Search Text" placeholder="Search Text (at least 3 chars)" className="min-w-0 flex-1 bg-transparent pl-[7px] outline-none placeholder:text-[#9a9a9a]" />
          <button aria-label="Clear search" className="flex w-6 justify-center"><Svg w={13}><path d="M1.500 1.500l10 10M11.500 1.500l-10 10" stroke="#222" strokeWidth="2.400" /></Svg></button>
        </div>
        <button aria-label="Settings" className="flex w-6 justify-center text-[#222]"><FaCog size={16} /></button>
      </div>
      <div className="flex h-[173px] shrink-0 flex-col justify-between">
        {levels.map((level) => (
          <div key={level} className="flex items-center">
            <span className="relative block w-[276px]">
              <select aria-label={level} className="block h-[25px] w-full appearance-none border border-[#acacac] bg-linear-to-b from-[#f0f0f0] to-[#e5e5e5] pt-0.5 pl-[5px] text-[#111]">
                <option>{level}</option>
              </select>
              <Svg w={6} h={5} className="pointer-events-none absolute top-[9px] right-[7px]"><path d="M1 .5L3 4 5 .5" stroke="#555" strokeWidth="1" /></Svg>
            </span>
            <button aria-label={`Go to ${level}`} className="flex w-6 justify-center">
              <Svg w={11}><path d="M1.500 8V1.500h6.500M1.500 1.500l8.500 8.500" stroke="#222" strokeWidth="1.500" /></Svg>
            </button>
          </div>
        ))}
      </div>
      <ul className="mt-[5px] flex-1 overflow-hidden border border-[#abadb3] bg-white">
        {resources.map((r) => (
          <li key={r.name} className="mb-0.5 flex h-[46px] items-center gap-[9px] rounded-[3px] bg-[#a6d2ff] pl-1 text-[#111]">
            <Svg w={40} className="bg-white">
              {r.draw}
              {r.mark && <path d={`M${r.mark} 1h3v3h-2`} stroke="#3a3ae8" strokeWidth="1.200" />}
              {r.text && (
                <text x={r.tx} y={r.ty} fill="#000" stroke="none" fontSize={r.text.length > 1 ? 11 : 14} className="font-['Liberation_Sans'] font-bold">{r.text}</text>
              )}
            </Svg>
            <span className="pt-1">{r.name}</span>
          </li>
        ))}
      </ul>
      <div className="mt-[5px]"><FavoriteList /></div>
    </div>

    {/* Highlight around the level selectors and its context menu */}
    <div className="pointer-events-none absolute top-[51px] -left-2 z-20 h-[191px] w-[330px] border-[7px] border-[#3399ff] shadow-[1px_2px_4px_rgba(0,0,0,0.45),inset_1px_2px_3px_rgba(0,0,0,0.35)]" />
    <div role="menu" className="absolute top-[128px] left-[125px] z-30 flex h-[28px] w-[180px] items-center border border-[#a0a0a0] bg-[#f1f1f1] shadow-[4px_4px_3px_rgba(0,0,0,0.4)]">
      <span className="flex h-full w-8 items-center justify-center border-r border-[#dedede]">
        <Svg w={16}><path d="M7 1l1.800 4.200 4.200.3-3.200 2.800M7 1L5.200 5.200 1 5.500l3.200 3L3 13l4-2" strokeWidth="1.100" /><circle cx="11.500" cy="11.500" r="3.500" strokeWidth="1" /><path d="M11.500 9.500v4M9.500 11.500h4" strokeWidth="1" /></Svg>
      </span>
      <button role="menuitem" className="pl-[6px] text-[11px] text-[#222]">Add to Favorites</button>
    </div>
    <div className="pointer-events-none absolute top-[121px] left-[114px] z-40"><Pointer /></div>
  </aside>
);

/* Plan view: axes, grid bubbles and section lines */
const Drawing = () => (
  <svg className="absolute top-0 left-0" width="1645" height="1156" viewBox="632 193 1645 1156" fill="none" aria-hidden="true">
    <g stroke="#990000" strokeWidth="1">
      <path d="M931.500 439v30" />
      <path d="M931.500 495V1097" strokeDasharray="26 26.300" />
      <path d="M1092 1136.500h18" />
      <path d="M1136 1136.500h111M1555 1136.500h419" strokeDasharray="27 25.400" />
      <path d="M1975 1136.500h38" />
    </g>
    <g stroke="#5050a5" strokeWidth="1">
      {[1075.5, 1175.5, 1275.5, 1375.5].map((x, i) => (
        <g key={x}>
          <path d={`M${x} 755V975`} />
          <circle cx={x + 1} cy="749.500" r="5" />
          <circle cx={x + 1} cy="980.500" r="5" />
          <text x={x - 0.5} y="752" fontSize="6" fill="#8d89c6" stroke="none">{i + 1}</text>
          <text x={x - 0.5} y="983" fontSize="6" fill="#8d89c6" stroke="none">{i + 1}</text>
        </g>
      ))}
      {[777.5, 943.5].map((y, i) => (
        <g key={y}>
          <path d={`M1041 ${y}H1413`} />
          <circle cx="1036.500" cy={i ? y : y - 1} r="5" />
          <circle cx="1419.500" cy={i ? y : y - 1} r="5" />
          <text x="1034" y={y + 1.5} fontSize="6" fill="#8d89c6" stroke="none">{i ? 7 : 6}</text>
          <text x="1417" y={y + 1.5} fontSize="6" fill="#8d89c6" stroke="none">{i ? 7 : 6}</text>
        </g>
      ))}
    </g>
    <g fill="#000">
      <path d="M812 774v6l6-3z" />
      <path d="M2160 774v6l-6-3z" />
      <path d="M1500 295h6l-3 5z" />
    </g>
    <path d="M822.500 775v4M2149.500 775v4M1501 291.500h4" stroke="#aaa" strokeWidth="2" />
  </svg>
);

const NavigationBar = () => (
  <div className="absolute top-0.5 right-px flex h-[118px] w-9 flex-col items-center rounded-[6px] border-2 border-[#bdbdbd] bg-[#f1f1f1] pt-0.5">
    <button aria-label="Close navigation bar" className="mr-0.5 self-end"><Svg w={8}><circle cx="4" cy="4" r="3.500" fill="#bbb" stroke="none" /><path d="M2.500 2.500l3 3M5.500 2.500l-3 3" stroke="#fff" strokeWidth="1" /></Svg></button>
    <button aria-label="Steering wheel" className="mt-2">
      <Svg w={26} h={26}>
        <path d="M2 11a9 9 0 019-9h9v10a9 9 0 01-9 9 9 9 0 01-9-10z" fill="#ececec" stroke="#a5a5a5" />
        <circle cx="11" cy="11" r="5" fill="#fff" stroke="#a5a5a5" />
        <text x="13" y="24" fontSize="9" fontWeight="700" fill="#6d96c2" stroke="none">2D</text>
      </Svg>
    </button>
    <Caret className="mt-1 opacity-60" />
    <span className="mt-1 h-px w-7 bg-[#bdbdbd]" />
    <button aria-label="Zoom region" className="mt-2">
      <Svg w={18}><path d="M1 1h11v11H1z" fill="#a9cf99" stroke="#8db57c" /><circle cx="12" cy="11" r="3.500" fill="#fff" stroke="#999" /><path d="M14.500 13.500L17 17" stroke="#999" /></Svg>
    </button>
    <Caret className="mt-1.5 opacity-60" />
    <Svg w={8} className="mt-2.5 mr-0.5 self-end"><circle cx="4" cy="4" r="3" stroke="#bbb" /><path d="M2 4h4" stroke="#bbb" /></Svg>
  </div>
);

const viewControls = [
  ['Detail level', <g><path d="M2 2h12v12H2z" fill="#fff" stroke="#555" strokeWidth="1" /><path d="M2 4.500h12M2 7.500h12M2 10.500h12M5 2v12M8 2v12M11 2v12" stroke="#666" strokeWidth="1" strokeDasharray="2 1" /></g>],
  ['Visual style', <path d="M2 6l4-4h8v8l-4 4H2zM2 6h8v8M10 6l4-4" fill="#fff" strokeWidth="1.200" />],
  ['Sun path', <g><circle cx="6" cy="6" r="4" fill="#fbe06a" stroke="#c9962b" /><path d="M8 8l6 6M14 8l-6 6" stroke="#d4291e" strokeWidth="2" /></g>],
  ['Shadows', <g><circle cx="7" cy="6" r="4.500" fill="#c5dff5" stroke="#3c74ae" /><path d="M1 13h7" /><path d="M8 8l6 6M14 8l-6 6" stroke="#d4291e" strokeWidth="2" /></g>],
  ['Crop view', <g><path d="M4 4h10v4M4 4v8M1 11h2M12 2v3" stroke="#3c74ae" strokeWidth="2" /><path d="M2 13h5M8 4V2" /><path d="M8 7l6 6M14 7l-6 6" stroke="#d4291e" strokeWidth="2" /></g>],
  ['Show crop region', <g><path d="M4 4h6M4 4v8M1 11h2" stroke="#3c74ae" strokeWidth="2" /><path d="M6 13h4M7 7v4" stroke="#d4291e" strokeWidth="2" /><circle cx="12" cy="6" r="3" fill="#d8ecfb" stroke="#3c74ae" /><path d="M12 9v4" stroke="#3c74ae" strokeWidth="2" /></g>],
  ['Temporary hide', <path d="M1 4l5 7 4-1 5-6M9 10c0-4 6-4 6 0s-6 4-6 0M1 4h3M12 3h3" />],
  ['Reveal hidden', <g><circle cx="8" cy="6" r="3" fill="#d8ecfb" stroke="#3c74ae" /><path d="M8 9v5" stroke="#3c74ae" strokeWidth="2" /></g>],
  ['View properties', <g><path d="M2 3h11v11H2z" fill="#fff" stroke="#111" strokeWidth="2" strokeDasharray="3 1" /><path d="M9 8h5v6H9z" fill="#5c6470" /></g>],
  ['Analytical model', <g><path d="M1 14V6l7-4 6 4v8zM5 4v10M9 3v11M1 9h13" /><circle cx="12" cy="6" r="3" fill="#d8ecfb" stroke="#3c74ae" /><path d="M4 12h5M6 9v5" stroke="#d4291e" strokeWidth="2" /></g>],
  ['Constraints', <g><path d="M2 1v6M14 1v6M2 4h12" /><path d="M2 12h6" strokeDasharray="2 1" /><path d="M9 10h6v4H9zM10 10V8h4v2" fill="#777" /></g>],
];

const ContextMenu = () => (
  <ul role="menu" className="absolute top-[77px] left-[51px] flex h-[94px] w-[157px] flex-col justify-center border border-[#a0a0a0] bg-[#f4f4f4] text-[11px] text-[#222] shadow-[2px_2px_3px_rgba(0,0,0,0.5)]">
    {['Rename', 'Move Up', 'Move Down', 'Remove'].map((m) => (
      <li key={m} className="ml-[30px] h-[22px] border-l border-[#e0e0e0]">
        <button role="menuitem" className="pl-[7px] leading-[22px]">{m}</button>
      </li>
    ))}
  </ul>
);

const Canvas = () => (
  <div className="relative min-w-0 flex-1 overflow-hidden bg-white">
    <Drawing />
    <NavigationBar />

    {/* Notes placed on the plan */}
    <p className="absolute top-[86px] left-7 h-[65px] w-[614px] border border-[#e4e4e4] bg-white pl-1 font-['Liberation_Sans'] text-[38px] leading-[58px] text-[#0080ff] shadow-[2px_3px_3px_rgba(0,0,0,0.15)]">
      Right-click to Add to Favorites
    </p>
    <p className="absolute top-[908px] left-[144px] font-['Liberation_Sans'] text-[38px] leading-[58px] whitespace-nowrap text-[#0080ff]">Right-click to edit</p>
    <svg className="absolute top-[948px] left-5 drop-shadow-[2px_3px_2px_rgba(0,0,0,0.4)]" width="576" height="44" viewBox="0 0 576 44" aria-hidden="true">
      <path d="M0 18h515V3l59 20-59 19V27H0z" fill="#0080ff" />
    </svg>

    <div className="absolute top-[794px] left-[615px] h-[279px] w-[312px] bg-[#eeeeee] px-1.5 pt-1">
      <FavoriteList />
      <ContextMenu />
      <div className="pointer-events-none absolute top-[77px] left-[51px]"><Pointer /></div>
    </div>
  </div>
);

const Workspace = () => (
  <main className="flex min-w-0 flex-1 flex-col bg-white">
    <div className="flex h-5 items-stretch justify-between bg-[#cccccc]">
      <div className="flex w-[127px] items-center bg-white pl-1">
        <Svg w={16}><path d="M1 2h8v2h5v10H6v-2H1z" fill="url(#plate)" /><path d="M6 12V6h8M9 4v3" strokeDasharray="2 1" /></Svg>
        <button className="ml-2 flex-1 text-left text-[11px] font-semibold text-[#333]">Ebene 0</button>
        <CloseButton label="Close view" />
      </div>
      <button aria-label="Tab list" className="flex w-5 flex-col items-center justify-center gap-0.5">
        <span className="h-px w-2 bg-[#333]" />
        <svg width="8" height="5" viewBox="0 0 8 5" fill="#333" aria-hidden="true"><path d="M0 0h8L4 5z" /></svg>
      </button>
    </div>
    <div className="flex min-h-0 flex-1">
      <Canvas />
      <div className="mr-0.5 flex w-4 items-center justify-center bg-[#efefef]"><span className="h-4 w-0.5 bg-[#858585]" /></div>
    </div>
    <div className="mb-0.5 flex h-[17px] items-center bg-[#efefef] text-[11px]">
      <span className="w-[78px] pl-7">1 : 50</span>
      {viewControls.map(([name, draw]) => (
        <button key={name} aria-label={name} className="flex w-[21px] justify-center"><Svg w={16}>{draw}</Svg></button>
      ))}
      <div className="flex flex-1 justify-center"><span className="h-0.5 w-[17px] bg-[#858585]" /></div>
      <Svg w={10} className="mr-1 self-end"><path d="M8 2h1M8 5h1M8 8h1M5 5h1M5 8h1M2 8h1" stroke="#999" strokeWidth="2" /></Svg>
    </div>
  </main>
);

/* One column of the tree: connector lines and the expander box */
const Branch = ({ up = true, down = true, across = true, box, open }) => (
  <span className="relative block h-[18px] w-5 shrink-0">
    {up && <span className="absolute top-0 left-[9px] h-[9px] border-l border-dotted border-[#999]" />}
    {down && <span className="absolute top-[9px] left-[9px] h-[9px] border-l border-dotted border-[#999]" />}
    {across && <span className="absolute top-[9px] right-0 left-[9px] border-t border-dotted border-[#999]" />}
    {box && (
      <Svg w={9} className="absolute top-[5px] left-[5px] bg-white">
        <path d="M.5 .5h8v8h-8z" stroke="#999" strokeWidth="1" />
        <path d={open ? 'M2 4.500h5' : 'M2 4.500h5M4.500 2v5'} stroke="#2b4a9b" strokeWidth="1" />
      </Svg>
    )}
  </span>
);

const ProjectBrowser = () => (
  <aside className="flex w-[265px] shrink-0 flex-col border-l-2 border-[#cccccc] bg-white">
    <PanelHeader title="Project Browser - Projekt1.rvt" />
    <ul className="pl-px text-[11px] text-black">
      {tree.map((node, n) => (
        <li key={node.name}>
          <div className="flex h-[18px] items-center">
            <Branch up={n > 0} down={n < tree.length - 1} box={node.open || node.box} open={node.open} />
            <Svg w={16} className="ml-px">{treeIcons[node.icon]}</Svg>
            <span className={clsx('ml-[3px] h-[18px] px-[3px] leading-[18px] whitespace-nowrap', node.selected && 'bg-[#dfdfdf]')}>{node.name}</span>
          </div>
          {node.items && (
            <ul>
              {node.items.map((item, i) => (
                <li key={item} className="flex h-[18px] items-center">
                  <Branch across={false} />
                  <Branch down={i < node.items.length - 1} box={item[0] === '+'} />
                  <span className="w-1 border-t border-dotted border-[#999]" />
                  <span className="pl-[3px] whitespace-nowrap">{item.slice(1)}</span>
                </li>
              ))}
            </ul>
          )}
        </li>
      ))}
    </ul>
  </aside>
);

const StatusSelect = ({ label, value }) => (
  <span className="relative block">
    <select aria-label={label} className="block h-[19px] w-[204px] appearance-none border border-[#dddddd] bg-white pl-[3px] text-[#777]">
      <option>{value}</option>
    </select>
    <Svg w={8} h={5} className="pointer-events-none absolute top-[7px] right-1"><path d="M.5 .5L4 4 7.500 .5" stroke="#999" strokeWidth="1" /></Svg>
  </span>
);

const Arrowhead = () => <path d="M8 6v9l2-2 1.500 3 1.300-.6L11.500 12.500H14z" fill="#fff" strokeWidth="0.900" />;

const selectionTools = [
  ['Select links', <g><path d="M1 5a3 2.500 0 016 0 3 2.500 0 01-6 0M7 5a3 2.500 0 016 0 3 2.500 0 01-6 0" stroke="#c88a00" strokeWidth="2" /><Arrowhead /></g>],
  ['Select underlay', <g><path d="M1 12l5-8h6l-4 8z" fill="#a9d3f5" stroke="#1f6fbf" /><path d="M9 1l5 5M14 1L9 6" stroke="#d4291e" strokeWidth="2" /><Arrowhead /></g>],
  ['Select pinned', <g><path d="M3 1h7v4H3zM2 8l2-3h5l2 3zM6 8v6" fill="#f1a25c" stroke="#b5602a" /><Arrowhead /></g>],
  ['Select by face', <g><path d="M2 4l5-2v11l-5 2z" fill="#a9d3f5" stroke="#1f6fbf" /><path d="M9 1l5 5M14 1L9 6" stroke="#d4291e" strokeWidth="2" /><Arrowhead /></g>],
  ['Drag on selection', <g><path d="M5 0v10M0 5h10M3 2l2-2 2 2M3 8l2 2 2-2" /><Arrowhead /></g>],
  ['Background processes', <circle cx="8" cy="8" r="5" stroke="#a5a5a5" strokeWidth="3" strokeDasharray="2.500 1.400" />],
  ['Filter', <path d="M1 2h14l-5 6v6H6V8z" fill="#8f98a8" />],
];

const StatusBar = () => (
  <footer className="flex h-6 shrink-0 items-center bg-[#cccccc] text-[11px] text-[#111]">
    <p className="flex-1 pl-px">Click to select, TAB for alternates, CTRL adds, SHIFT unselects.</p>
    <div className="mr-[225px] flex items-center">
      <button aria-label="Worksets" className="flex w-[26px] justify-center"><Svg w={18}><path d="M2 9l3-2 4 2v6l-3 2-4-2z" fill="#a9d3f5" stroke="#1f6fbf" /><path d="M7 5l3-4h4v5l-3 2z" fill="#b9dba5" stroke="#2f7a24" /><path d="M13 9v8M11 8l2 2 2-2" stroke="#555" /></Svg></button>
      <StatusSelect label="Active workset" value="" />
      <button aria-label="Editing requests" className="flex w-[54px] items-center gap-1 pl-1.5 whitespace-nowrap"><Svg w={16}><path d="M4 2h9v4H9L4 15H1l5-8z" stroke="#999" fill="#ddd" /></Svg>:0</button>
      <button aria-label="Design options" className="flex w-[26px] justify-center"><Svg w={16}><path d="M1 1h14v14H1z" fill="#fff" /><path d="M1 3h14" strokeWidth="3" /><path d="M4 7h2M8 7h5M4 11h2M8 11h5" /></Svg></button>
      <button aria-label="Add to design option" className="mr-1 flex w-7 justify-center"><Svg w={16}><path d="M1 1h13v13H1z" fill="#a8a8a8" stroke="#999" /><path d="M7 6l6 6M7 12V6h6" stroke="#777" /></Svg></button>
      <StatusSelect label="Design option" value="Main Model" />
    </div>
    <div className="flex w-[255px] items-center">
      {selectionTools.map(([name, draw]) => (
        <button key={name} aria-label={name} className="flex w-[25px] justify-center"><Svg w={16}>{draw}</Svg></button>
      ))}
      <span>:0</span>
    </div>
  </footer>
);

const App = () => (
  <div className="flex h-screen flex-col overflow-hidden bg-[#eeeeee] font-['Open_Sans',sans-serif]">
    <Fills />
    <TitleBar />
    <TabBar />
    <Ribbon />
    <div className="h-[26px] shrink-0 bg-[#eeeeee]" />
    <div className="flex min-h-0 flex-1 border-t-2 border-[#cccccc]">
      <Properties />
      <ResourceLoader />
      <Workspace />
      <ProjectBrowser />
    </div>
    <StatusBar />
  </div>
);

export default App;
